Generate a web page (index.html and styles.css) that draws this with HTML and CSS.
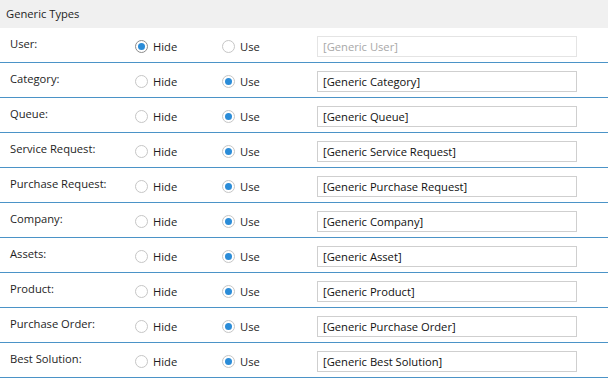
FILE: index.html
```html
<!DOCTYPE html>
<html>
<head>
<meta charset="utf-8">
<link rel="stylesheet" href="styles.css">
</head>
<body>
<div class="panel">
  <div class="header">Generic Types</div>
  <div class="row">
    <div class="label">User:</div>
    <div class="opt"><span class="radio on focus"></span><span>Hide</span></div>
    <div class="opt"><span class="radio"></span><span>Use</span></div>
    <div class="box disabled">[Generic User]</div>
  </div>
  <div class="row">
    <div class="label">Category:</div>
    <div class="opt"><span class="radio"></span><span>Hide</span></div>
    <div class="opt"><span class="radio on"></span><span>Use</span></div>
    <div class="box">[Generic Category]</div>
  </div>
  <div class="row">
    <div class="label">Queue:</div>
    <div class="opt"><span class="radio"></span><span>Hide</span></div>
    <div class="opt"><span class="radio on"></span><span>Use</span></div>
    <div class="box">[Generic Queue]</div>
  </div>
  <div class="row">
    <div class="label">Service Request:</div>
    <div class="opt"><span class="radio"></span><span>Hide</span></div>
    <div class="opt"><span class="radio on"></span><span>Use</span></div>
    <div class="box">[Generic Service Request]</div>
  </div>
  <div class="row">
    <div class="label">Purchase Request:</div>
    <div class="opt"><span class="radio"></span><span>Hide</span></div>
    <div class="opt"><span class="radio on"></span><span>Use</span></div>
    <div class="box">[Generic Purchase Request]</div>
  </div>
  <div class="row">
    <div class="label">Company:</div>
    <div class="opt"><span class="radio"></span><span>Hide</span></div>
    <div class="opt"><span class="radio on"></span><span>Use</span></div>
    <div class="box">[Generic Company]</div>
  </div>
  <div class="row">
    <div class="label">Assets:</div>
    <div class="opt"><span class="radio"></span><span>Hide</span></div>
    <div class="opt"><span class="radio on"></span><span>Use</span></div>
    <div class="box">[Generic Asset]</div>
  </div>
  <div class="row">
    <div class="label">Product:</div>
    <div class="opt"><span class="radio"></span><span>Hide</span></div>
    <div class="opt"><span class="radio on"></span><span>Use</span></div>
    <div class="box">[Generic Product]</div>
  </div>
  <div class="row">
    <div class="label">Purchase Order:</div>
    <div class="opt"><span class="radio"></span><span>Hide</span></div>
    <div class="opt"><span class="radio on"></span><span>Use</span></div>
    <div class="box">[Generic Purchase Order]</div>
  </div>
  <div class="row">
    <div class="label">Best Solution:</div>
    <div class="opt"><span class="radio"></span><span>Hide</span></div>
    <div class="opt"><span class="radio on"></span><span>Use</span></div>
    <div class="box">[Generic Best Solution]</div>
  </div>
</div>
</body>
</html>
```

FILE: styles.css
```css
html, body {
  margin: 0;
  padding: 0;
  background: #ffffff;
}
body {
  font-family: "Open Sans", "Noto Sans", sans-serif;
  font-size: 11.2px;
  color: #1e1e1e;
}
.panel {
  width: 608px;
}
.header {
  height: 28px;
  background: #f0f0f0;
  padding-left: 6px;
  display: flex;
  align-items: center;
  line-height: 16px;
  padding-bottom: 1px;
  box-sizing: border-box;
}
.row {
  height: 35px;
  box-sizing: border-box;
  border-bottom: 1px solid #4b93c7;
  display: grid;
  grid-template-columns: 135px 87px 95px 260px;
  align-items: start;
}
.label {
  padding-left: 10px;
  padding-top: 8px;
  line-height: 16px;
}
.opt {
  margin-top: 8px;
  height: 21px;
  display: flex;
  align-items: center;
  gap: 5px;
  line-height: 16px;
}
.radio {
  width: 11px;
  height: 11px;
  border: 1px solid #c6c6c6;
  border-radius: 50%;
  background: #ffffff;
  position: relative;
  flex: none;
}
.radio.focus {
  border-color: #8c8c8c;
}
.radio.on::after {
  content: "";
  position: absolute;
  left: 2px;
  top: 2px;
  width: 7px;
  height: 7px;
  border-radius: 50%;
  background: #2b8cd8;
}
.box {
  margin-top: 8px;
  height: 21px;
  box-sizing: border-box;
  border: 1px solid #cfcfcf;
  padding-left: 5px;
  display: flex;
  align-items: center;
  line-height: 16px;
  color: #111;
}
.box.disabled {
  border-color: #e4e4e4;
  color: #a8a8a8;
}
```
